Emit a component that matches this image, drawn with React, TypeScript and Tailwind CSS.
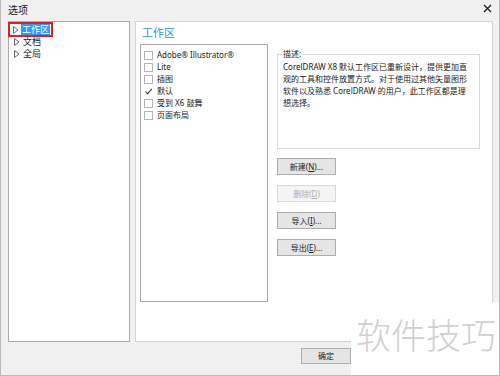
import React from "react";

const font = { fontFamily: '"Noto Sans", "Noto Sans CJK SC", sans-serif' };

function Arrow() {
  return (
    <svg width="6" height="8" viewBox="0 0 6 8" className="shrink-0">
      <path d="M0.5 0.5 L5 4 L0.5 7.5 Z" fill="none" stroke="#6b6b6b" strokeWidth="1" />
    </svg>
  );
}

function Check({ checked }: { checked?: boolean }) {
  if (checked) {
    return (
      <svg width="9" height="9" viewBox="0 0 9 9" className="shrink-0">
        <path d="M1.5 4.5 L3.5 6.8 L7.8 1.8" fill="none" stroke="#333" strokeWidth="1.1" />
      </svg>
    );
  }
  return <div className="h-[9px] w-[9px] shrink-0 border border-[#b5b5b5] bg-white" />;
}

function Btn({ label, disabled }: { label: React.ReactNode; disabled?: boolean }) {
  return (
    <div
      className={
        disabled
          ? "flex h-[17px] w-[59px] items-center justify-center border border-[#d9d9d9] bg-[#f4f4f4] text-[8px] text-[#b0b0b0]"
          : "flex h-[17px] w-[59px] items-center justify-center border border-[#adadad] bg-[#e5e5e5] text-[8px] text-[#222]"
      }
    >
      {label}
    </div>
  );
}

const items = [
  { label: "Adobe® Illustrator®" },
  { label: "Lite" },
  { label: "插图" },
  { label: "默认", checked: true },
  { label: "受到 X6 鼓舞" },
  { label: "页面布局" },
];

export default function App() {
  return (
    <div
      style={font}
      className="relative h-[376px] w-[500px] overflow-hidden border-x border-b border-[#b9b9b9] bg-[#f0f0f0] text-[#1a1a1a]"
    >
      {/* Title bar */}
      <div className="flex h-[21px] items-center justify-between pl-[7px] pr-[7px]">
        <span className="-mt-[1px] text-[10px]">选项</span>
        <svg width="9" height="9" viewBox="0 0 9 9" className="-mt-[5px]">
          <path d="M1 1 L8 8 M8 1 L1 8" stroke="#222" strokeWidth="1.4" />
        </svg>
      </div>

      {/* Main area */}
      <div className="flex h-[321px] gap-[5px] pl-[7px] pr-[6px]">
        {/* Tree */}
        <div className="w-[122px] border border-[#acacac] bg-white pt-[1px]">
          <div className="flex h-[13px] items-center">
            <div className="ml-[-1px] flex h-[15px] items-center gap-[2px] border-2 border-[#e02020] pl-[3px] pr-[1px]">
              <Arrow />
              <span className="bg-[#3399ff] px-[1px] text-[9px] leading-[11px] text-white">工作区</span>
            </div>
          </div>
          <div className="flex h-[12px] items-center gap-[3px] pl-[5px] text-[9px]">
            <Arrow />
            <span>文档</span>
          </div>
          <div className="flex h-[12px] items-center gap-[3px] pl-[5px] text-[9px]">
            <Arrow />
            <span>全局</span>
          </div>
        </div>

        {/* Right panel */}
        <div className="flex-1 border border-[#d4d4d4] bg-white px-[4px] pt-[3px]">
          <div className="h-[19px] pl-[2px] text-[11px] leading-[16px] text-[#2f96d8]">工作区</div>
          <div className="flex gap-[9px]">
            <div className="h-[258px] w-[128px] border border-[#a9a9a9] bg-white pt-[4px]">
              {items.map((it) => (
                <div key={it.label} className="flex h-[12px] items-center gap-[4px] pl-[3px] text-[8px]">
                  <Check checked={it.checked} />
                  <span>{it.label}</span>
                </div>
              ))}
            </div>
            <div className="flex w-[203px] flex-col">
              <div className="relative mt-[10px] h-[95px] border border-[#dadada] px-[5px] pt-[6px] text-[8px] leading-[12px]">
                <span className="absolute -top-[7px] left-[4px] bg-white px-[1px] text-[8px]">描述:</span>
                <div className="whitespace-nowrap">CorelDRAW X8 默认工作区已重新设计，提供更加直</div>
                <div className="whitespace-nowrap">观的工具和控件放置方式。对于使用过其他矢量图形</div>
                <div className="whitespace-nowrap">软件以及熟悉 CorelDRAW 的用户，此工作区都是理</div>
                <div className="whitespace-nowrap">想选择。</div>
              </div>
              <div className="mt-[9px] flex flex-col gap-[10px]">
                <Btn label={<>新建(<u>N</u>)...</>} />
                <Btn label={<>删除(<u>D</u>)</>} disabled />
                <Btn label={<>导入(<u>I</u>)...</>} />
                <Btn label={<>导出(<u>E</u>)...</>} />
              </div>
            </div>
          </div>
        </div>
      </div>

      {/* Bottom buttons */}
      <div className="flex pl-[300px] pt-[6px]">
        <div className="flex h-[16px] w-[50px] items-center justify-center border border-[#adadad] bg-[#e5e5e5] text-[8px]">
          确定
        </div>
      </div>

      {/* Watermark */}
      <div className="absolute left-[350px] top-[302px] flex h-[74px] w-[150px] items-start justify-center bg-white pt-[14px]">
        <span className="text-[35px] font-light leading-[40px] text-[#d0d0d0]">软件技巧</span>
      </div>
    </div>
  );
}
